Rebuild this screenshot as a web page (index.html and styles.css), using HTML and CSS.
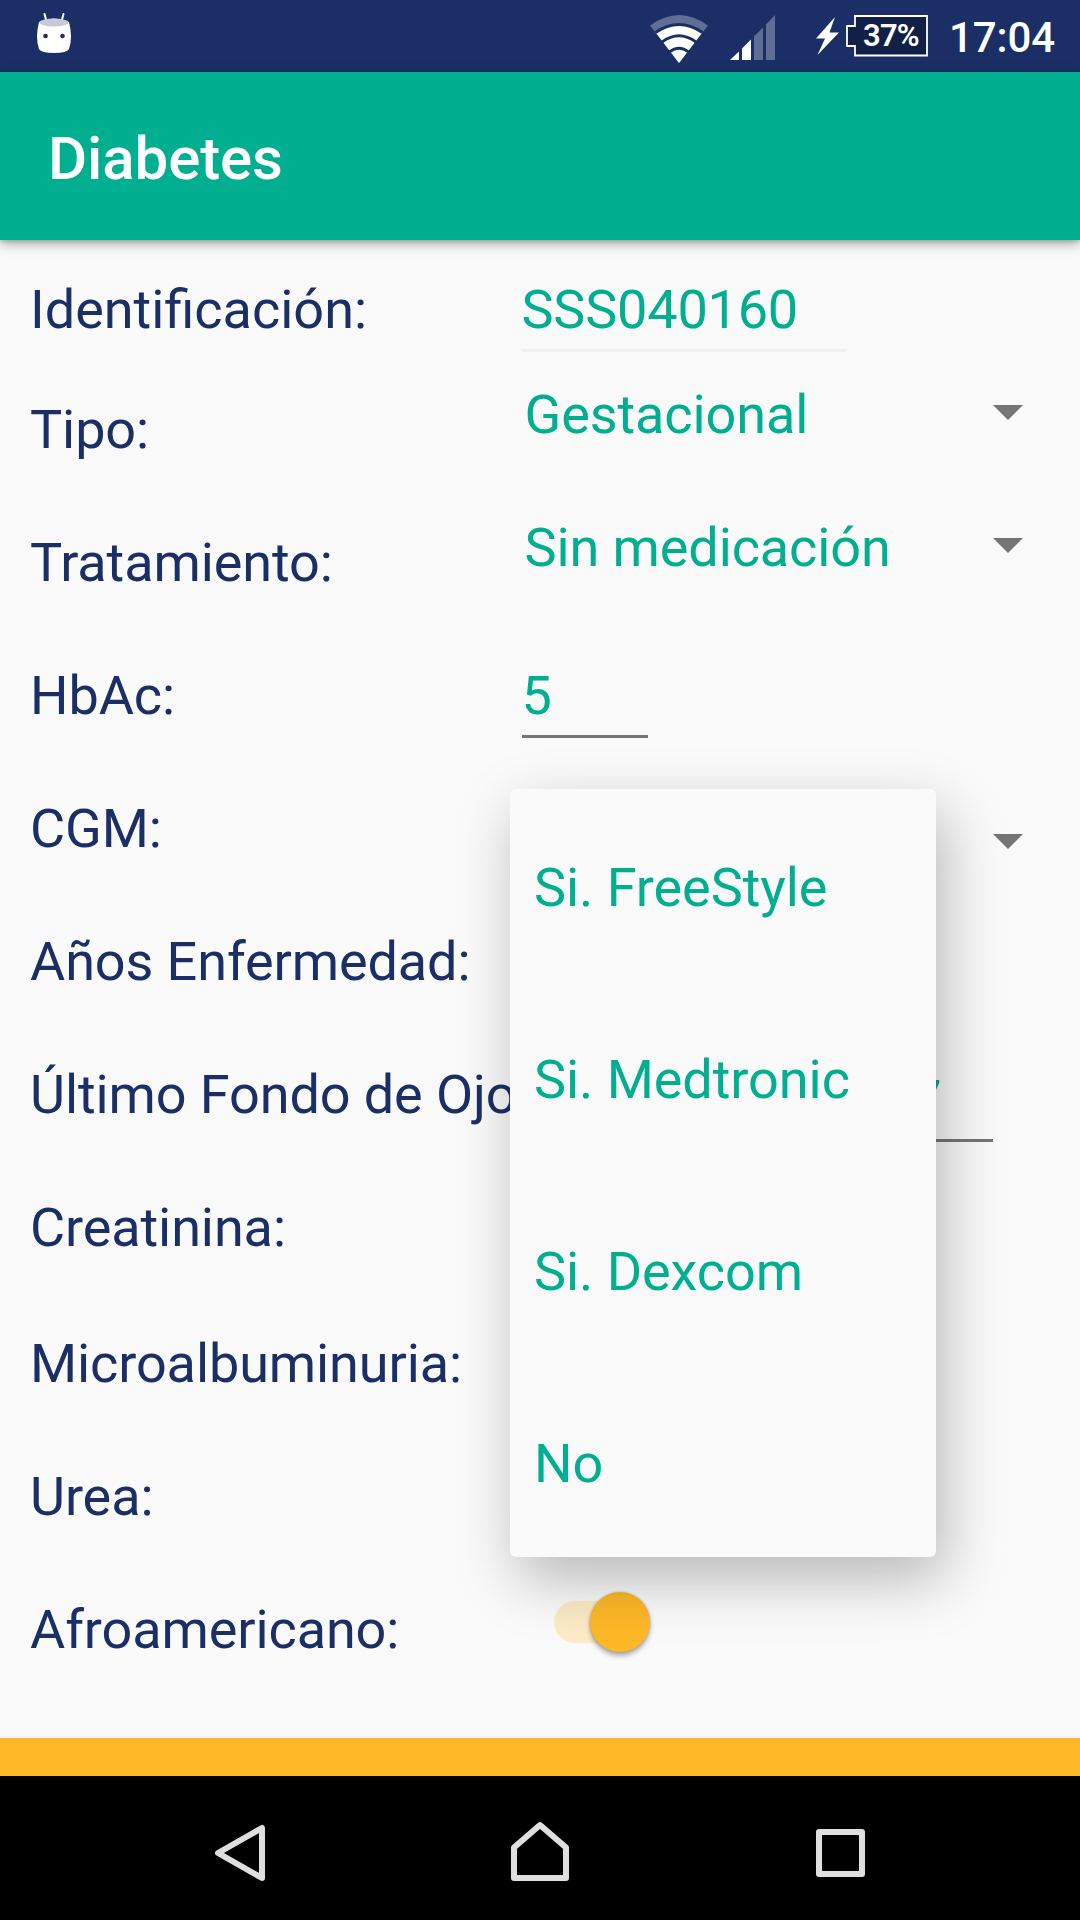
FILE: index.html
```
<!DOCTYPE html>
<html lang="es">
<head>
<meta charset="utf-8">
<title>Diabetes</title>
<link rel="stylesheet" href="styles.css">
</head>
<body>
<div class="screen">
  <header class="status">
    <svg class="robot" width="36" height="44" viewBox="0 0 36 44">
      <path d="M8.500 2l2 7.500M27.500 2l-2 7.500" stroke="#fff" stroke-width="2" stroke-linecap="round"/>
      <path d="M3 10Q18 3 33 10Q37 25 33 37Q31 41 18 41Q5 41 3 37Q-1 25 3 10Z" fill="#fff"/>
      <ellipse cx="18" cy="10.500" rx="14.500" ry="4" fill="#c5c9d8"/>
      <circle cx="9.500" cy="24" r="2.300" fill="#1b2f66"/><circle cx="26.500" cy="24" r="2.300" fill="#1b2f66"/>
    </svg>
    <svg class="wifi" width="58" height="48" viewBox="0 0 58 48">
      <path d="M0 10.500Q29 -10.500 58 10.500L29 48Z" fill="#606e96"/>
      <path d="M6 18Q29 1 52 18L29 48Z" fill="#fff"/>
      <path d="M5.500 17.500Q29 1.500 52.500 17.500M12 27Q29 14.500 46 27M19.500 37Q29 29.500 38.500 37" fill="none" stroke="#1b2f66" stroke-width="2.800"/>
    </svg>
    <svg class="signal" width="45" height="45" viewBox="0 0 45 45">
      <path d="M0 45L9 36.500V45ZM12 45V33.500L21 24.500V45Z" fill="#fff"/>
      <path d="M24 45V21.500L33 12.500V45ZM36 45V9.500L45 0V45Z" fill="#606e96"/>
    </svg>
    <svg class="bolt" width="24" height="38" viewBox="0 0 24 38"><path d="M19 0L0 21.500H9L1.500 38L23 15.500H13.500Z" fill="#fff"/></svg>
    <div class="battery">
      <svg width="82" height="42" viewBox="0 0 82 42"><path d="M9 1H81V40.500H9V31H1V11H9Z" fill="#122048" stroke="#fff" stroke-width="1.800"/></svg>
      <span class="percent">37%</span>
    </div>
    <span class="clock">17:04</span>
  </header>
  <div class="appbar"><h1>Diabetes</h1></div>
  <main class="form">
    <div class="row first"><label>Identificación:</label><div class="value input id">SSS040160</div></div>
    <div class="row"><label>Tipo:</label><div class="value spinner"><span>Gestacional</span><i class="caret"></i></div></div>
    <div class="row"><label>Tratamiento:</label><div class="value spinner"><span>Sin medicación</span><i class="caret"></i></div></div>
    <div class="row"><label>HbAc:</label><div class="value input short">5</div></div>
    <div class="row"><label>CGM:</label><div class="value spinner cgm"><span></span><i class="caret"></i></div></div>
    <div class="row"><label>Años Enfermedad:</label></div>
    <div class="row"><label>Último Fondo de Ojo:</label><div class="value input date">7</div></div>
    <div class="row tall"><label>Creatinina:</label></div>
    <div class="row"><label>Microalbuminuria:</label></div>
    <div class="row"><label>Urea:</label></div>
    <div class="row"><label>Afroamericano:</label><div class="value switch"><i class="thumb"></i></div></div>
  </main>
  <div class="footer"></div>
  <nav class="nav">
    <svg width="1080" height="144" viewBox="0 0 1080 144" fill="none" stroke="#dfdfdf" stroke-width="6" stroke-linejoin="round">
      <path d="M262 52V102L218 77Z"/>
      <path d="M514 102V71.500L540 49L566 71.500V102Z"/>
      <path d="M819 56H862V98H819Z"/>
    </svg>
  </nav>
  <ul class="popup"><li>Si. FreeStyle</li><li>Si. Medtronic</li><li>Si. Dexcom</li><li>No</li></ul>
</div>
</body>
</html>
```
FILE: styles.css
```
* { box-sizing: border-box; }
body { margin: 0; background: #fafafa; font-family: Roboto, sans-serif; }
.screen { position: relative; width: 1080px; height: 1920px; display: flex; flex-direction: column; overflow: hidden; }
.status { height: 72px; background: #1b2f66; display: flex; align-items: flex-start; color: #fff; flex: none; }
.status svg { display: block; flex: none; }
.robot { margin: 12px 0 0 36px; }
.wifi { margin: 15px 0 0 578px; }
.signal { margin: 15px 0 0 22px; }
.bolt { margin: 17px 0 0 41px; }
.battery { position: relative; margin: 15px 0 0 6px; width: 82px; height: 42px; }
.percent { position: absolute; left: 17px; top: 2px; font-size: 31px; line-height: 38px; font-weight: 600; letter-spacing: -0.8px; }
.clock { margin: 13px 0 0 21px; font-size: 42px; line-height: 50px; font-weight: 500; letter-spacing: -0.1px; }
.appbar { height: 168px; background: #00ae90; padding: 0 48px; display: flex; align-items: center; flex: none; z-index: 1; box-shadow: 0 4px 12px rgba(0,0,0,.3), 0 2px 4px rgba(0,0,0,.15); }
h1 { margin: 6px 0 0; color: #fff; font-size: 60px; line-height: 70px; font-weight: 500; letter-spacing: -0.1px; }
.form { height: 1496px; flex: none; padding: 34px 30px 0; }
.row { height: 133px; display: grid; grid-template-columns: 491.5px 1fr; align-items: start; font-size: 54px; line-height: 66px; letter-spacing: -0.1px; }
.row.first { height: 120px; }
.row.first label { letter-spacing: normal; }
.row.tall { height: 136px; }
label { color: #1b2f66; padding-top: 3px; white-space: nowrap; }
.value { color: #00ae90; }
.input { padding-top: 3px; height: 78px; border-bottom: 3px solid #757575; }
.id { width: 324px; border-color: #f0f0f0; letter-spacing: -0.2px; }
.short { width: 126px; }
.date { width: 471px; height: 83px; padding: 8px 51px 0 0; text-align: right; }
.spinner { display: flex; justify-content: space-between; padding: 0 27px 0 3px; margin-top: -12px; }
.spinner.cgm { margin-top: 18px; }
.caret { width: 30px; height: 15px; background: #757575; clip-path: polygon(0 0, 100% 0, 50% 100%); margin-top: 23px; }
.switch { margin: 7px 0 0 32px; width: 84px; height: 42px; border-radius: 21px; background: #fcebc6; }
.thumb { display: block; width: 60px; height: 60px; border-radius: 50%; background: #fdb827; margin: -9px 0 0 36px; box-shadow: 0 4px 5px rgba(0,0,0,.3), 0 0 3px rgba(0,0,0,.2); }
.footer { height: 40px; border-top: 2px solid #f1f1f1; background: #fdb827; flex: none; }
.nav { height: 144px; background: #000; flex: none; }
.popup { position: absolute; z-index: 2; left: 510px; top: 789px; width: 426px; height: 768px; margin: 0; padding: 0 24px; list-style: none; border-radius: 6px; background: #fafafa; color: #00ae90; font-size: 54px; line-height: 66px; letter-spacing: -0.05px; box-shadow: 8px 22px 60px rgba(0,0,0,.27); }
.popup li { height: 192px; display: flex; align-items: center; padding-top: 5px; }
```
